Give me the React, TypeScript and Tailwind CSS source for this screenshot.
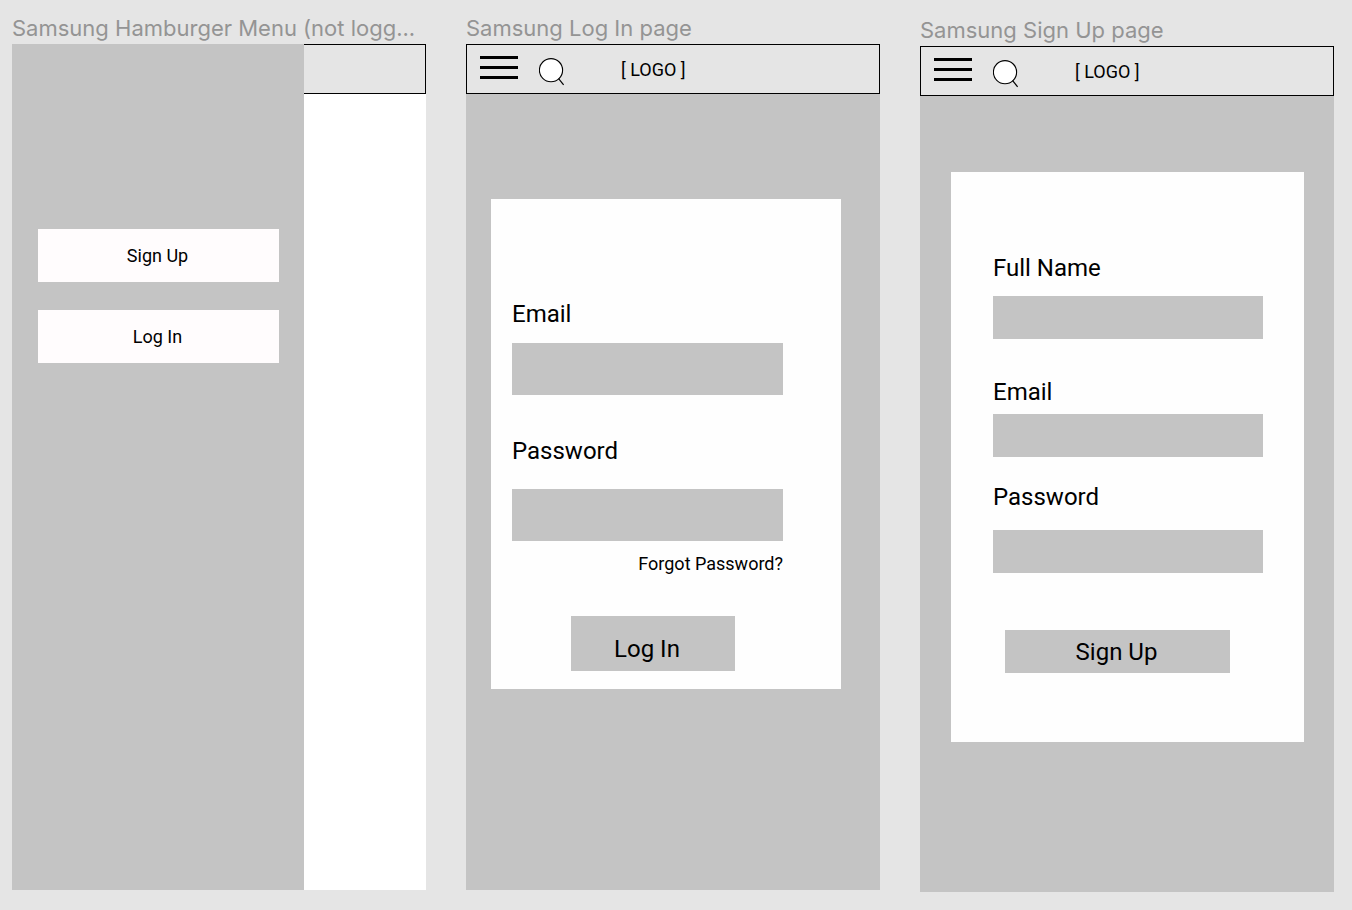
import { useId } from "react";
import type { ReactNode } from "react";

function Artboard({
  title,
  className,
  children,
}: {
  title: string;
  className: string;
  children: ReactNode;
}) {
  return (
    <section className={`flex min-w-0 flex-col ${className}`}>
      <h2 className="truncate font-['Inter',sans-serif] text-[22px] leading-8 text-[#949494]">
        {title}
      </h2>
      <div className="flex flex-1 flex-col bg-[#c4c4c4]">{children}</div>
    </section>
  );
}

function TopBar() {
  return (
    <header className="flex h-[50px] items-start border border-black bg-[#e5e5e5] pl-[13px]">
      <button type="button" aria-label="Menu" className="mt-[11px] flex w-[38px] flex-col gap-[7px]">
        <span className="h-[3px] w-full bg-black" />
        <span className="h-[3px] w-full bg-black" />
        <span className="h-[3px] w-full bg-black" />
      </button>
      <button type="button" aria-label="Search" className="mt-[13px] ml-[21px]">
        <svg width="26" height="28" viewBox="0 0 26 28" fill="none" stroke="black">
          <circle cx="12" cy="12.2" r="11.6" fill="white" strokeWidth="1.1" />
          <path d="M19.6 20.6 24.6 26.8" strokeWidth="1.2" />
        </svg>
      </button>
      <span className="ml-14 text-lg leading-[50px]">[ LOGO ]</span>
    </header>
  );
}

function Field({
  label,
  type,
  labelClass,
  inputClass,
}: {
  label: string;
  type: string;
  labelClass: string;
  inputClass: string;
}) {
  const id = useId();
  return (
    <>
      <label htmlFor={id} className={`block text-2xl leading-7 ${labelClass}`}>
        {label}
      </label>
      <input
        id={id}
        type={type}
        className={`block w-full bg-[#c4c4c4] px-3 text-lg outline-none ${inputClass}`}
      />
    </>
  );
}

function DrawerButton({ children }: { children: ReactNode }) {
  return (
    <button type="button" className="h-[53px] bg-[#fffcfd] pr-0.5 text-lg">
      {children}
    </button>
  );
}

function MenuScreen() {
  return (
    <div className="flex flex-1">
      <nav className="flex w-[292px] shrink-0 flex-col gap-7 pt-[185px] pr-[25px] pl-[26px]">
        <DrawerButton>Sign Up</DrawerButton>
        <DrawerButton>Log In</DrawerButton>
      </nav>
      <div className="flex-1 bg-white">
        <div className="h-[50px] border border-l-0 border-black bg-[#e5e5e5]" />
      </div>
    </div>
  );
}

function LogInScreen() {
  return (
    <>
      <TopBar />
      <form className="mt-[105px] mr-[39px] ml-[25px] flex flex-col bg-[#fefefe] pt-[101px] pr-[58px] pb-[18px] pl-[21px]">
        <Field label="Email" type="email" labelClass="mb-[15px]" inputClass="mb-[42px] h-[52px]" />
        <Field label="Password" type="password" labelClass="mb-6" inputClass="mb-3 h-[52px]" />
        <a href="#forgot" className="self-end text-lg leading-[22px]">
          Forgot Password?
        </a>
        <button
          type="button"
          className="mt-[41px] ml-[59px] h-[55px] w-[164px] bg-[#c4c4c4] pt-[10px] pr-3 text-2xl"
        >
          Log In
        </button>
      </form>
    </>
  );
}

function SignUpScreen() {
  return (
    <>
      <TopBar />
      <form className="mt-[76px] mr-[30px] ml-[31px] flex flex-col bg-[#fefefe] pt-[82px] pr-[41px] pb-[69px] pl-[42px]">
        <Field label="Full Name" type="text" labelClass="mb-[14px]" inputClass="mb-[39px] h-[43px]" />
        <Field label="Email" type="email" labelClass="mb-2" inputClass="mb-[26px] h-[43px]" />
        <Field label="Password" type="password" labelClass="mb-[19px]" inputClass="h-[43px]" />
        <button
          type="button"
          className="mt-[57px] ml-3 h-[43px] w-[225px] bg-[#c4c4c4] pr-0.5 text-2xl"
        >
          Sign Up
        </button>
      </form>
    </>
  );
}

export default function App() {
  return (
    <main className="grid min-h-screen grid-cols-3 gap-10 bg-[#e5e5e5] pr-[18px] pl-3 font-['Roboto',sans-serif] text-black">
      <Artboard title="Samsung Hamburger Menu (not logg..." className="pt-3 pb-5">
        <MenuScreen />
      </Artboard>
      <Artboard title="Samsung Log In page" className="pt-3 pb-5">
        <LogInScreen />
      </Artboard>
      <Artboard title="Samsung Sign Up page" className="pt-[14px] pb-[18px]">
        <SignUpScreen />
      </Artboard>
    </main>
  );
}
